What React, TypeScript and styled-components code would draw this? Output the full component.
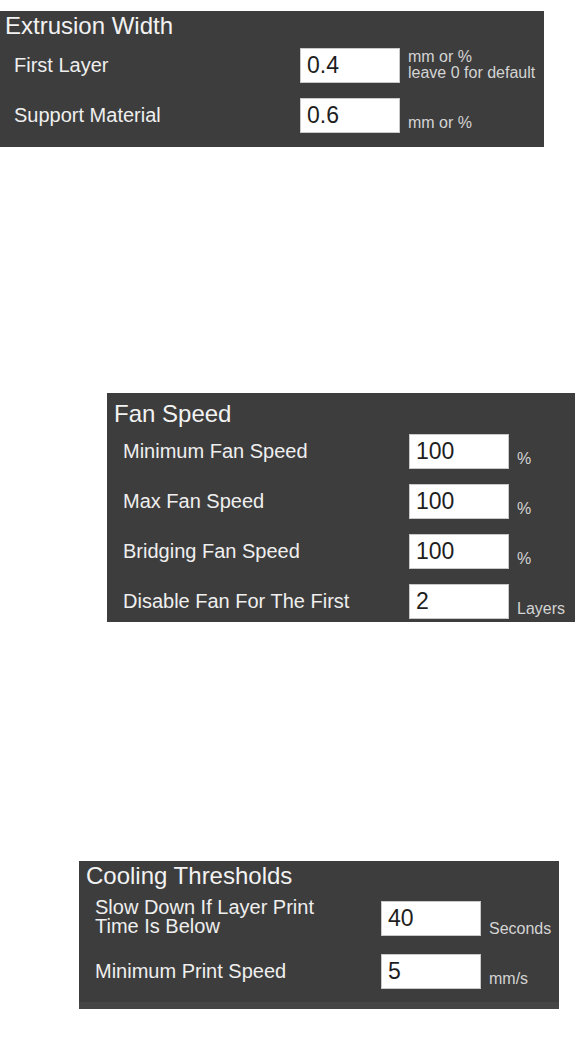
import React from "react";
import styled, { createGlobalStyle } from "styled-components";

const GlobalStyle = createGlobalStyle`
  html, body {
    margin: 0;
    padding: 0;
    background: #ffffff;
  }
  body {
    font-family: "Liberation Sans", Arial, sans-serif;
    overflow: hidden;
  }
`;

const Page = styled.div`
  display: flex;
  flex-direction: column;
  align-items: flex-start;
  width: 578px;
`;

const Panel = styled.section<{
  $left: number;
  $top: number;
  $width: number;
  $padTop: number;
  $padBottom: number;
}>`
  box-sizing: border-box;
  margin-left: ${(p) => p.$left}px;
  margin-top: ${(p) => p.$top}px;
  width: ${(p) => p.$width}px;
  padding-top: ${(p) => p.$padTop}px;
  padding-bottom: ${(p) => p.$padBottom}px;
  background: #3d3d3d;
  display: flex;
  flex-direction: column;
`;

const Title = styled.h2`
  margin: 0;
  padding-left: 7px;
  font-size: 24px;
  line-height: 28px;
  font-weight: normal;
  color: #f2f2f2;
`;

const Rows = styled.div<{ $gapTop: number }>`
  margin-top: ${(p) => p.$gapTop}px;
  display: flex;
  flex-direction: column;
  gap: 15px;
`;

const Row = styled.div`
  display: grid;
  grid-template-columns: 286px 100px auto;
  align-items: center;
  padding-left: 16px;
`;

const Label = styled.label<{ $end?: boolean }>`
  max-width: 250px;
  font-size: 20px;
  line-height: 19px;
  color: #efefef;
  align-self: ${(p) => (p.$end ? "end" : "center")};
  padding-bottom: ${(p) => (p.$end ? "3px" : "0")};
`;

const Field = styled.input`
  box-sizing: border-box;
  width: 100px;
  height: 35px;
  margin: 0;
  padding: 0 0 0 6px;
  border: 1px solid #c9c9c9;
  border-radius: 0;
  background: #ffffff;
  color: #1e1e1e;
  font-family: "Liberation Sans", Arial, sans-serif;
  font-size: 23px;
  outline: none;
`;

const Unit = styled.span`
  align-self: end;
  margin-left: 8px;
  padding-bottom: 2px;
  font-size: 16px;
  line-height: 16px;
  color: #d4d4d4;
  white-space: nowrap;
`;

const BottomSpace = styled.div`
  height: 13px;
`;

const Footer = styled.div`
  height: 7px;
  background: #454545;
`;

type Setting = { label: string; value: string; unit: React.ReactNode; end?: boolean };

const SettingRow = ({ s }: { s: Setting }) => (
  <Row>
    <Label $end={s.end}>{s.label}</Label>
    <Field defaultValue={s.value} />
    <Unit>{s.unit}</Unit>
  </Row>
);

const extrusion: Setting[] = [
  {
    label: "First Layer",
    value: "0.4",
    unit: (
      <>
        mm or %
        <br />
        leave 0 for default
      </>
    ),
  },
  { label: "Support Material", value: "0.6", unit: "mm or %" },
];

const fan: Setting[] = [
  { label: "Minimum Fan Speed", value: "100", unit: "%" },
  { label: "Max Fan Speed", value: "100", unit: "%" },
  { label: "Bridging Fan Speed", value: "100", unit: "%" },
  { label: "Disable Fan For The First", value: "2", unit: "Layers" },
];

const cooling: Setting[] = [
  { label: "Slow Down If Layer Print Time Is Below", value: "40", unit: "Seconds", end: true },
  { label: "Minimum Print Speed", value: "5", unit: "mm/s" },
];

export default function App() {
  return (
    <>
      <GlobalStyle />
      <Page>
        <Panel $left={-2} $top={11} $width={546} $padTop={1} $padBottom={14}>
          <Title>Extrusion Width</Title>
          <Rows $gapTop={8}>
            {extrusion.map((s) => (
              <SettingRow key={s.label} s={s} />
            ))}
          </Rows>
        </Panel>

        <Panel $left={107} $top={246} $width={468} $padTop={7} $padBottom={3}>
          <Title>Fan Speed</Title>
          <Rows $gapTop={6}>
            {fan.map((s) => (
              <SettingRow key={s.label} s={s} />
            ))}
          </Rows>
        </Panel>

        <Panel $left={79} $top={239} $width={480} $padTop={1} $padBottom={0}>
          <Title>Cooling Thresholds</Title>
          <Rows $gapTop={8}>
            {cooling.map((s) => (
              <SettingRow key={s.label} s={s} />
            ))}
          </Rows>
          <BottomSpace />
          <Footer />
        </Panel>
      </Page>
    </>
  );
}
